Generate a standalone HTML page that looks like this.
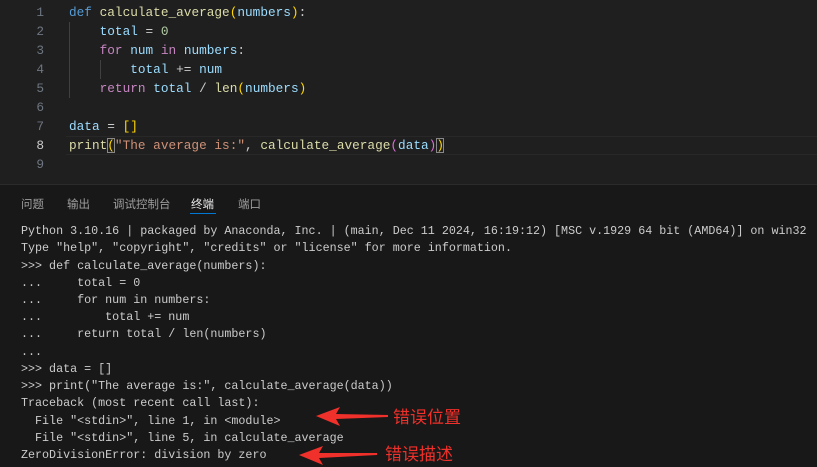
<!DOCTYPE html>
<html><head><meta charset="utf-8"><style>
html,body{margin:0;width:817px;height:467px;overflow:hidden}
body{background:#1f1f1f;position:relative;font-family:"Liberation Mono",monospace}
.ed{position:absolute;left:0;top:0;width:817px;height:184px;background:#1f1f1f}
.ln{position:absolute;left:0;width:44px;text-align:right;color:#6e7681;font-size:12.75px}
.cl{position:absolute;left:69px;white-space:pre;font-size:12.75px;color:#cccccc}
.k{color:#569cd6}.f{color:#dcdcaa}.v{color:#9cdcfe}.c{color:#c586c0}.s{color:#ce9178}.n{color:#b5cea8}.y{color:#ffd700}.p{color:#da70d6}
.guide{position:absolute;width:1px;background:#404040}
.panel{position:absolute;left:0;top:184px;width:817px;height:283px;box-sizing:border-box;background:#181818;border-top:1px solid #2b2b2b}
.tab{position:absolute;top:11px;font-family:"Liberation Sans","Noto Sans CJK SC",sans-serif;font-size:11.5px;color:#9d9d9d}
.t{position:absolute;left:21px;white-space:pre;font-size:11.7px;color:#cccccc}
.red{position:absolute;font-family:"Liberation Sans","Noto Sans CJK SC",sans-serif;font-size:17px;color:#f0302a}
</style></head><body>
<div class="ed">
<div class="ln" style="top:5px">1</div><div class="ln" style="top:24px">2</div><div class="ln" style="top:43px">3</div><div class="ln" style="top:62px">4</div><div class="ln" style="top:81px">5</div><div class="ln" style="top:100px">6</div><div class="ln" style="top:119px">7</div><div class="ln" style="top:138px;color:#cccccc">8</div><div class="ln" style="top:157px">9</div>
<div class="guide" style="left:69px;top:22px;height:76px"></div>
<div class="guide" style="left:100px;top:60px;height:19px"></div>
<div style="position:absolute;left:66px;top:136px;width:751px;height:17px;border-top:1px solid #282828;border-bottom:1px solid #282828"></div>
<div class="cl" style="top:5px"><span class="k">def</span> <span class="f">calculate_average</span><span class="y">(</span><span class="v">numbers</span><span class="y">)</span>:</div>
<div class="cl" style="top:24px">    <span class="v">total</span> = <span class="n">0</span></div>
<div class="cl" style="top:43px">    <span class="c">for</span> <span class="v">num</span> <span class="c">in</span> <span class="v">numbers</span>:</div>
<div class="cl" style="top:62px">        <span class="v">total</span> += <span class="v">num</span></div>
<div class="cl" style="top:81px">    <span class="c">return</span> <span class="v">total</span> / <span class="f">len</span><span class="y">(</span><span class="v">numbers</span><span class="y">)</span></div>
<div class="cl" style="top:119px"><span class="v">data</span> = <span class="y">[]</span></div>
<div class="cl" style="top:138px"><span class="f">print</span><span class="y" style="outline:1px solid #888;outline-offset:-1px">(</span><span class="s">"The average is:"</span>, <span class="f">calculate_average</span><span class="p">(</span><span class="v">data</span><span class="p">)</span><span class="y" style="outline:1px solid #888;outline-offset:-1px">)</span></div>
</div>
<div class="panel">
<div class="tab" style="left:21px">问题</div>
<div class="tab" style="left:67px">输出</div>
<div class="tab" style="left:113px">调试控制台</div>
<div class="tab" style="left:191px;color:#e7e7e7">终端</div>
<div class="tab" style="left:238px">端口</div>
<div style="position:absolute;left:190px;top:28px;width:26px;height:1px;background:#0078d4"></div>
<div class="t" style="top:39px">Python 3.10.16 | packaged by Anaconda, Inc. | (main, Dec 11 2024, 16:19:12) [MSC v.1929 64 bit (AMD64)] on win32</div>
<div class="t" style="top:56px">Type "help", "copyright", "credits" or "license" for more information.</div>
<div class="t" style="top:73.5px">&gt;&gt;&gt; def calculate_average(numbers):</div>
<div class="t" style="top:90.7px">...     total = 0</div>
<div class="t" style="top:108px">...     for num in numbers:</div>
<div class="t" style="top:125px">...         total += num</div>
<div class="t" style="top:142.4px">...     return total / len(numbers)</div>
<div class="t" style="top:159.6px">...</div>
<div class="t" style="top:176.8px">&gt;&gt;&gt; data = []</div>
<div class="t" style="top:194px">&gt;&gt;&gt; print("The average is:", calculate_average(data))</div>
<div class="t" style="top:211.3px">Traceback (most recent call last):</div>
<div class="t" style="top:228.5px">  File "&lt;stdin&gt;", line 1, in &lt;module&gt;</div>
<div class="t" style="top:245.7px">  File "&lt;stdin&gt;", line 5, in calculate_average</div>
<div class="t" style="top:263px">ZeroDivisionError: division by zero</div>
</div>
<svg style="position:absolute;left:0;top:0" width="817" height="467">
<polygon points="316,416 340,407 336,414 388,415 388,417 336,419 340,426" fill="#f0302a"/>
<polygon points="299,455 323,446 319,453 377,453 377,455 319,458 323,465" fill="#f0302a"/>
</svg>
<div class="red" style="left:393px;top:403px">错误位置</div>
<div class="red" style="left:385px;top:440px">错误描述</div>
</body></html>
